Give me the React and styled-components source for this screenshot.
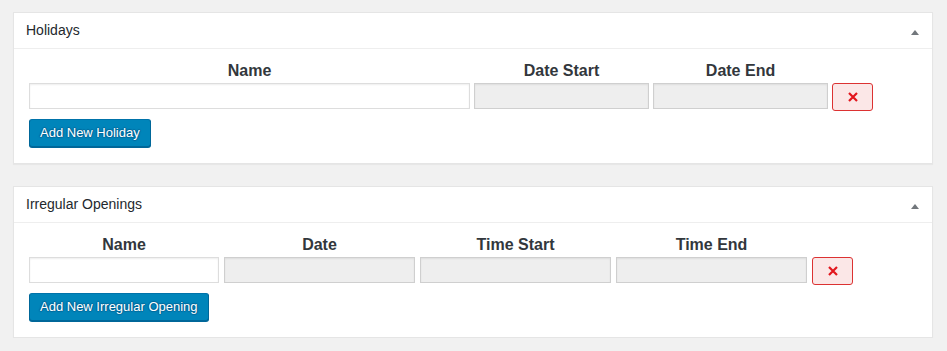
import React from "react";
import styled, { createGlobalStyle } from "styled-components";

const GlobalStyle = createGlobalStyle`
  html, body { margin: 0; padding: 0; background: #f1f1f1; }
  body { font-family: "Liberation Sans", Arial, sans-serif; color: #23282d; }
`;

const Page = styled.div`
  padding: 12px 14px 0 13px;
  display: flex;
  flex-direction: column;
  gap: 22px;
`;

const Panel = styled.section`
  background: #fff;
  border: 1px solid #e5e5e5;
  box-shadow: 0 1px 1px rgba(0, 0, 0, 0.04);
`;

const PanelHeader = styled.div`
  height: 35px;
  display: flex;
  align-items: center;
  justify-content: space-between;
  padding: 0 13px 0 12px;
  border-bottom: 1px solid #eee;
`;

const Title = styled.h2`
  margin: 0;
  font-size: 14px;
  font-weight: 400;
  line-height: 35px;
  color: #23282d;
`;

const Toggle = styled.svg`
  width: 8px;
  height: 5px;
  margin-top: 3px;
  fill: #72777c;
`;

const Body = styled.div`
  padding: 12px 15px 16px 15px;
`;

const Grid = styled.div`
  display: grid;
  grid-template-columns: ${(p) => p.$cols};
  column-gap: ${(p) => p.$gap}px;
  row-gap: 3px;
  align-items: start;
`;

const ColHead = styled.div`
  font-size: 16px;
  font-weight: 700;
  line-height: 19px;
  text-align: center;
  color: #32373c;
`;

const Input = styled.input`
  box-sizing: border-box;
  height: 26px;
  width: 100%;
  margin: 0;
  padding: 3px 5px;
  font-family: inherit;
  font-size: 14px;
  border: 1px solid ${(p) => (p.disabled ? "#cfcfcf" : "#ddd")};
  background: ${(p) => (p.disabled ? "#eeeeee" : "#fff")};
  box-shadow: inset 0 1px 2px rgba(0, 0, 0, 0.07);
  outline: none;
`;

const DeleteButton = styled.button`
  box-sizing: border-box;
  width: 41px;
  height: 28px;
  margin: 0;
  padding: 0;
  display: flex;
  align-items: center;
  justify-content: center;
  background: #fbe7e7;
  border: 1px solid #dc3232;
  border-radius: 3px;
  cursor: pointer;
`;

const AddButton = styled.button`
  box-sizing: border-box;
  height: 28px;
  margin-top: 8px;
  padding: 0 10px 1px 10px;
  font-family: "Liberation Sans", Arial, sans-serif;
  font-size: 13px;
  line-height: 26px;
  color: #fff;
  background: #0085ba;
  border: 1px solid;
  border-color: #0073aa #006799 #006799;
  border-radius: 3px;
  box-shadow: 0 1px 0 #006799;
  text-shadow: 0 -1px 1px #006799, 1px 0 1px #006799, 0 1px 1px #006799, -1px 0 1px #006799;
  cursor: pointer;
`;

const XIcon = () => (
  <svg width="10" height="10" viewBox="0 0 10 10">
    <path d="M1 1 L9 9 M9 1 L1 9" stroke="#e2161d" strokeWidth="2.2" fill="none" />
  </svg>
);

const MetaBox = ({ title, cols, gap, columns, addLabel }) => (
  <Panel>
    <PanelHeader>
      <Title>{title}</Title>
      <Toggle viewBox="0 0 8 5">
        <polygon points="0,5 4,0 8,5" />
      </Toggle>
    </PanelHeader>
    <Body>
      <Grid $cols={cols} $gap={gap}>
        {columns.map((c) => (
          <ColHead key={c.label}>{c.label}</ColHead>
        ))}
        <div />
        {columns.map((c) => (
          <Input key={c.label} type="text" disabled={c.disabled} readOnly={c.disabled} />
        ))}
        <DeleteButton aria-label="Remove">
          <XIcon />
        </DeleteButton>
      </Grid>
      <AddButton>{addLabel}</AddButton>
    </Body>
  </Panel>
);

export default function App() {
  return (
    <>
      <GlobalStyle />
      <Page>
        <MetaBox
          title="Holidays"
          cols="441px 175px 175px 41px"
          gap={4}
          columns={[
            { label: "Name" },
            { label: "Date Start", disabled: true },
            { label: "Date End", disabled: true },
          ]}
          addLabel="Add New Holiday"
        />
        <MetaBox
          title="Irregular Openings"
          cols="190px 191px 191px 191px 41px"
          gap={5}
          columns={[
            { label: "Name" },
            { label: "Date", disabled: true },
            { label: "Time Start", disabled: true },
            { label: "Time End", disabled: true },
          ]}
          addLabel="Add New Irregular Opening"
        />
      </Page>
    </>
  );
}
